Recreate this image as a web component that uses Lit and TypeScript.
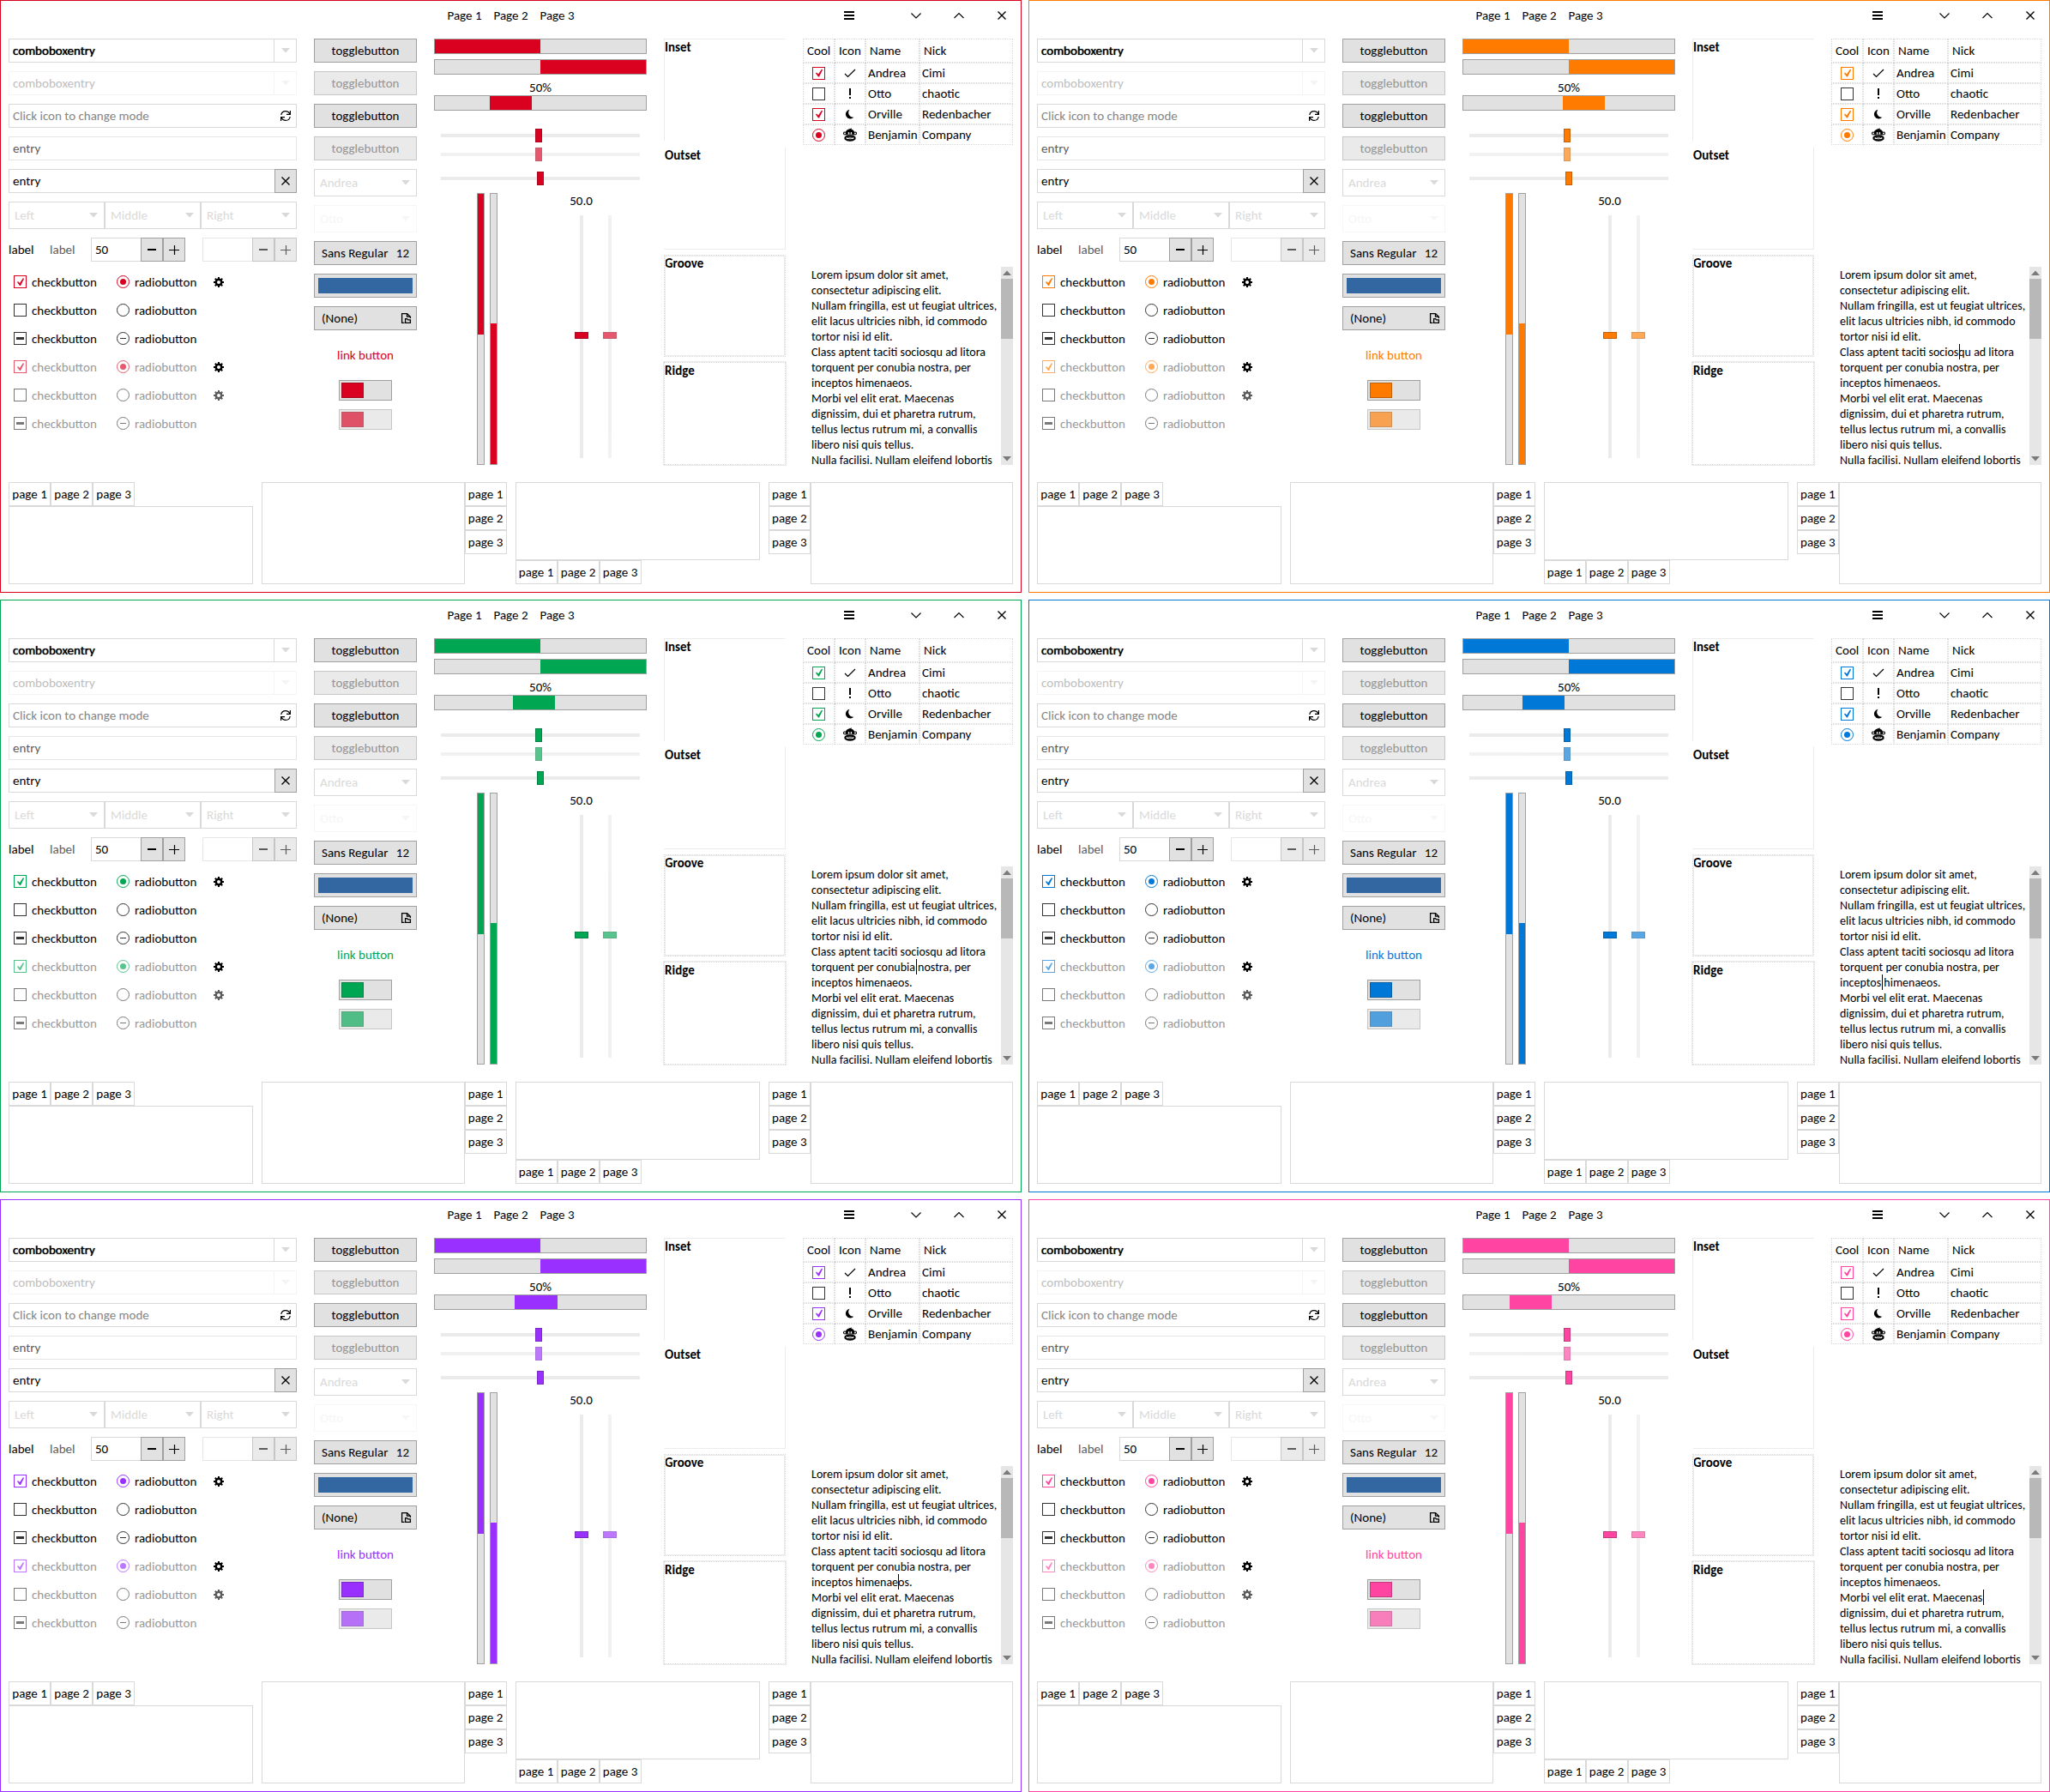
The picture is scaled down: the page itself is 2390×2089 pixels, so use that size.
import { LitElement, html, svg, css, nothing } from "lit";
import { customElement, property } from "lit/decorators.js";

interface Theme {
  accent: string;
  /** Left edge of the pulsing block, in percent of the trough. */
  pulse: number;
  /** Caret place in the text view: pixels from the left, and the line. */
  caret?: { x: number; line: number };
}

const THEMES: Theme[] = [
  { accent: "#d90020", pulse: 26 },
  { accent: "#ff7b00", pulse: 47, caret: { x: 149, line: 5 } },
  { accent: "#00a651", pulse: 37, caret: { x: 132, line: 6 } },
  { accent: "#0078d7", pulse: 28, caret: { x: 59, line: 7 } },
  { accent: "#9a30ff", pulse: 38, caret: { x: 111, line: 7 } },
  { accent: "#ff45a1", pulse: 22, caret: { x: 177, line: 8 } },
];

/** Filled share of the upright level bars. */
const LEVEL = 52;

const LOREM = [
  "Lorem ipsum dolor sit amet,",
  "consectetur adipiscing elit.",
  "Nullam fringilla, est ut feugiat ultrices,",
  "elit lacus ultricies nibh, id commodo",
  "tortor nisi id elit.",
  "Class aptent taciti sociosqu ad litora",
  "torquent per conubia nostra, per",
  "inceptos himenaeos.",
  "Morbi vel elit erat. Maecenas",
  "dignissim, dui et pharetra rutrum,",
  "tellus lectus rutrum mi, a convallis",
  "libero nisi quis tellus.",
  "Nulla facilisi. Nullam eleifend lobortis",
].join("\n");

const icon = (size: number, body: unknown) =>
  html`<svg class="icon" width=${size} height=${size} viewBox="0 0 ${size} ${size}" aria-hidden="true">${body}</svg>`;

const arrow = () =>
  html`<svg class="icon arrow" width="10" height="6" viewBox="0 0 10 6" aria-hidden="true"><path d="M0 0h10L5 5.500z" fill="currentColor" /></svg>`;
const menuIcon = () => icon(16, svg`<path d="M2 3h12v2H2zM2 7h12v2H2zM2 11h12v2H2z" fill="currentColor" />`);
const downIcon = () => icon(16, svg`<path d="M2.500 5.500l5.500 5.500L13.500 5.500" fill="none" stroke="currentColor" stroke-width="1.1" />`);
const upIcon = () => icon(16, svg`<path d="M2.500 11L8 5.500l5.500 5.500" fill="none" stroke="currentColor" stroke-width="1.1" />`);
const closeIcon = () => icon(16, svg`<path d="M3.500 3.500l9 9M12.500 3.500l-9 9" fill="none" stroke="currentColor" stroke-width="1.400" />`);
const minusIcon = () => icon(16, svg`<path d="M3 7h10v2H3z" fill="currentColor" />`);
const plusIcon = () => icon(16, svg`<path d="M2 8.500h12M8.500 3v11" stroke="currentColor" stroke-width="1.200" fill="none" />`);
const refreshIcon = () =>
  icon(16, svg`<g fill="none" stroke="currentColor" stroke-width="1.200">
    <path d="M2.800 7C3.200 4.200 5.500 2.600 8 2.600c2.200 0 4 1.200 5 3.400" /><path d="M13.400 2v4.400H9" />
    <path d="M13.200 9C12.800 11.800 10.500 13.400 8 13.400c-2.200 0-4-1.200-5-3.400" /><path d="M2.600 14V9.600H7" /></g>`);
const fileIcon = () =>
  icon(16, svg`<path d="M6.500 13.400H3.600V2.600h6l3.800 3.600V8M9.500 2.600v3.600h3.600" fill="none" stroke="currentColor" stroke-width="1.300" />
    <path d="M7.600 13.400V8.600h2l1 1.200h2.800v3.600z" fill="none" stroke="currentColor" stroke-width="1.300" />`);
const gearIcon = () =>
  icon(12, svg`<g fill="currentColor"><path fill-rule="evenodd" d="M6 1.500a4.500 4.500 0 1 0 0 9a4.500 4.500 0 1 0 0-9zM6 4a2 2 0 1 1 0 4a2 2 0 1 1 0-4z" />
    ${[0, 45, 90, 135].map((a) => svg`<path transform="rotate(${a} 6 6)" d="M5 0h2v2.600H5zM5 9.400h2V12H5z" />`)}</g>`);
const tickIcon = () => icon(16, svg`<path d="M2 9l3.500 3.500L14 4" fill="none" stroke="currentColor" stroke-width="1.200" />`);
const alertIcon = () => icon(16, svg`<path d="M7 2h2v8H7zM7 12h2v2H7z" fill="currentColor" />`);
const moonIcon = () => icon(16, svg`<path d="M7.500 2.800a5.400 5.400 0 1 0 5 8.800A5.400 5.400 0 0 1 7.500 2.800z" fill="currentColor" />`);
const monkeyIcon = () =>
  icon(16, svg`<path d="M6.500 0.500l1.500 1L9.500 0v2L8 3z" fill="currentColor" />
    <ellipse cx="8" cy="6.200" rx="5.300" ry="4.800" fill="currentColor" />
    <g fill="#fff" stroke="currentColor" stroke-width="1.100"><circle cx="2" cy="6.500" r="1.500" /><circle cx="14" cy="6.500" r="1.500" /></g>
    <path d="M5.800 7.600V5.400a.8.8 0 0 1 1.500 0v2.200M8.700 7.600V5.400a.8.8 0 0 1 1.500 0v2.200" fill="#fff" />
    <ellipse cx="8" cy="12" rx="7" ry="4" fill="currentColor" stroke="#fff" stroke-width=".5" />
    <ellipse cx="8" cy="12" rx="4.600" ry="1.200" fill="#fff" />
    <path d="M4.600 11.200c2.200 1 4.600 1 6.800 0" stroke="currentColor" stroke-width=".8" fill="none" />`);

@customElement("demo-window")
export class DemoWindow extends LitElement {
  @property({ attribute: false }) theme: Theme = THEMES[0];

  static styles = css`
    :host {
      display: block;
      box-sizing: border-box;
      border: 1px solid var(--accent);
      padding: 0 9px 9px;
      background: #fff;
      color: #000;
    }
    *, *::before, *::after { box-sizing: border-box; }
    button, input, select, textarea { font: inherit; color: inherit; margin: 0; border-radius: 0; }
    button { padding: 0; cursor: default; }
    .icon { display: block; flex: none; }

    .header { display: grid; grid-template-columns: 1fr auto 1fr; align-items: center; height: 34px; margin-bottom: 10px; }
    .pages { grid-column: 2; display: flex; gap: 14px; }
    .bare { display: flex; background: none; border: 0; }
    .controls { display: flex; justify-content: flex-end; gap: 34px; padding-right: 5px; }
    .controls .menu { margin-right: 28px; }

    .body { display: grid; grid-template-columns: 336fr 120fr 248fr 142fr 245fr; gap: 20px; }
    .col { display: flex; flex-direction: column; gap: 10px; min-width: 0; }

    .field { display: flex; align-items: center; height: 28px; border: 1px solid #d9d9d9; }
    .field input { flex: 1; min-width: 0; width: 0; height: 100%; border: 0; padding: 0 4px; background: none; outline: 0; -webkit-text-fill-color: currentColor; }
    .field input::placeholder { color: #858585; opacity: 1; -webkit-text-fill-color: #858585; }
    .field.focus input { text-shadow: 0 0 1px #000; }
    .field.off { border-color: #e6e6e6; color: #5c5c5c; }
    .field.faint { border-color: #f4f4f4; color: #bdbdbd; }
    .field.joined { flex: 1; min-width: 0; border-right: 0; }
    .drop { display: grid; place-items: center; width: 26px; height: 26px; border: 0; border-left: 1px solid #d9d9d9; background: none; color: #d9d9d9; }
    .faint .drop { border-color: #f4f4f4; color: #f4f4f4; }
    .field .refresh { width: 25px; justify-content: center; }
    .row { display: flex; }

    .btn { display: flex; align-items: center; justify-content: center; height: 28px; border: 1px solid #a0a0a0; background: #e1e1e1; }
    .btn.square { width: 26px; flex: none; }
    .btn:disabled { background: #eaeaea; border-color: #c6c6c6; color: #949494; }
    .btn.square:disabled { color: #5c5c5c; }
    .btn.spread { justify-content: space-between; padding: 0 8px; }
    .btn.file { padding-right: 4px; }
    .btn.swatch { padding: 4px; }
    .swatch .fill { flex: 1; align-self: stretch; background: #3267a1; }

    .combo { display: grid; flex: 1; min-width: 0; align-items: center; height: 32px; border: 1px solid #d9d9d9; color: #d9d9d9; }
    .col > .combo { flex: none; }
    .combo select { grid-area: 1 / 1; width: 100%; height: 30px; padding: 0 6px; appearance: none; border: 0; background: none; opacity: 1; }
    .combo .arrow { grid-area: 1 / 1; justify-self: end; margin-right: 7px; pointer-events: none; }
    .combo.faint { border-color: #f6f6f6; color: #f6f6f6; }

    .spins { display: flex; align-items: center; gap: 20px; }
    .spins .text { width: 28px; }
    .spins .dim { color: #5c5c5c; }
    .spin { display: flex; flex: 1; min-width: 0; }

    .checks { display: grid; grid-template-columns: 120px 113px 1fr; grid-auto-rows: 27px; row-gap: 6px; align-items: center; padding: 0 0 35px 6px; }
    .check { display: flex; align-items: center; gap: 6px; }
    .check.off, .gear.off { color: #999; }
    .gear { width: 12px; }
    .gear.off { color: #5c5c5c; }
    .mark { flex: none; width: 15px; height: 15px; border: 1px solid #333; background: #fff; appearance: none; display: grid; place-items: center; color: #333; }
    .mark[type="radio"] { border-radius: 50%; }
    .mark:checked { border-color: var(--accent); color: var(--accent); }
    .mark:disabled { opacity: 0.65; }
    .mark[type="checkbox"]:checked::before { content: ""; width: 13px; height: 13px; background: currentColor; clip-path: polygon(3px 7px, 4px 6px, 6px 8px, 10px 2px, 11px 3px, 7px 11px, 6px 11px); }
    .mark[type="radio"]:checked::before { content: ""; width: 7px; height: 7px; border-radius: 50%; background: currentColor; }
    .mark.mixed::before { content: ""; width: 9px; height: 3px; background: currentColor; }
    .mark.mixed[type="radio"]::before { width: 7px; height: 1px; }

    .link { display: grid; place-items: center; height: 38px; color: var(--accent); text-decoration: none; }
    .switch { align-self: center; width: 62px; height: 24px; padding: 2px; border: 1px solid #a0a0a0; background: #e1e1e1; appearance: none; margin: 0; display: block; }
    .switch::before { content: ""; display: block; width: 26px; height: 18px; background: var(--accent); border: 1px solid var(--edge); }
    .switch:disabled { background: #eaeaea; border-color: #c6c6c6; }
    .switch:disabled::before { opacity: 0.65; }

    .meters { gap: 0; }
    .bar { display: flex; height: 18px; border: 1px solid #a0a0a0; background: #e1e1e1; }
    .bar + .bar { margin-top: 6px; }
    .bar.inverted { justify-content: flex-end; }
    .part { background: var(--accent); }
    .percent { margin-top: 6px; line-height: 18px; text-align: center; }
    .sliders { display: flex; flex-direction: column; padding: 21px 8px 9px; gap: 6px; }
    .slider { display: block; width: 100%; height: 16px; background: none; appearance: none; outline: 0; }
    .slider::-webkit-slider-runnable-track { height: 4px; background: #ebebeb; }
    .slider::-webkit-slider-thumb { appearance: none; width: 8px; height: 16px; margin-top: -6px; background: var(--accent); border: 1px solid var(--edge); }
    .slider:disabled { opacity: 0.65; }
    .slider.apart { margin-top: 6px; }
    .uprights { display: flex; flex: 1; padding-left: 50px; }
    .vbar { display: flex; flex-direction: column; width: 9px; margin-right: 6px; border: 1px solid #a0a0a0; background: #e1e1e1; }
    .vbar.inverted { flex-direction: column-reverse; }
    .vscales { display: grid; grid-template: 26px 1fr / 33px 33px; justify-items: center; margin-left: 75px; padding-bottom: 8px; }
    .vscales .value { line-height: 18px; }
    .slider.upright { grid-row: 2; writing-mode: vertical-lr; width: 16px; height: 100%; }
    .slider.upright::-webkit-slider-runnable-track { width: 4px; height: auto; }
    .slider.upright::-webkit-slider-thumb { width: 16px; height: 8px; margin: 0 0 0 -6px; }

    .frames { gap: 6px; }
    .frame { flex: 1; border: 1px solid transparent; font-weight: bold; line-height: 18px; }
    .frame.inset { border-color: #ebebeb transparent transparent #ebebeb; }
    .frame.outset { border-color: transparent #ebebeb #ebebeb transparent; }
    .frame.groove { border: 1px dotted #d9d9d9; outline: 1px solid #ebebeb; outline-offset: -2px; }
    .frame.ridge { border: 1px dotted #d9d9d9; outline: 1px solid #ebebeb; }

    .lists { justify-content: space-between; }
    table { width: 100%; table-layout: fixed; border-collapse: separate; border-spacing: 0; }
    .c-cool { width: 37px; }
    .c-icon { width: 36px; }
    .c-name { width: 63px; }
    th, td { border: 1px dotted #d9d9d9; text-align: left; font-weight: normal; white-space: nowrap; }
    th { height: 28px; padding: 0 4px; }
    td { height: 24px; padding: 0 2px; }
    td .mark, td .icon { margin: 0 auto; }
    .textview { position: relative; display: flex; height: 231px; }
    .textview textarea { flex: 1; min-width: 0; padding: 1px 0 0 10px; border: 0; outline: 0; resize: none; overflow: hidden; white-space: pre; background: none; font-size: 14px; line-height: 18px; }
    .caret { position: absolute; width: 1px; height: 18px; background: #000; }
    .scrollbar { display: flex; flex-direction: column; align-items: center; width: 14px; background: #e6e6e6; color: #7a7a7a; }
    .scrollbar .up { transform: scaleY(-1); }
    .thumb { width: 14px; height: 70px; background: #b8b8b8; margin-bottom: auto; }

    .books { display: grid; grid-template-columns: repeat(4, 1fr); gap: 10px; margin-top: 20px; height: 119px; }
    .book { display: flex; }
    .book.top { flex-direction: column; }
    .book.bottom { flex-direction: column-reverse; }
    .book.right { flex-direction: row-reverse; }
    .tabs { display: flex; }
    .left .tabs, .right .tabs { flex-direction: column; }
    .tab { width: 49px; height: 28px; border: 1px solid #d9d9d9; background: none; white-space: nowrap; }
    .sheet { flex: 1; border: 1px solid #d9d9d9; }
  `;

  private entry(cls: string, label: string, value: string, tail: unknown, placeholder = "") {
    return html`<div class="field ${cls}">
      <input type="text" aria-label=${label} .value=${value} placeholder=${placeholder} ?disabled=${cls === "faint" || cls === "off"} />${tail}
    </div>`;
  }

  private combo(label: string, off = false) {
    return html`<div class="combo ${off ? "faint" : ""}">
      <select aria-label=${label} ?disabled=${off}><option>${label}</option></select>${arrow()}
    </div>`;
  }

  private spin(value: string, off = false) {
    return html`<div class="spin">
      <div class="field joined ${off ? "off" : ""}"><input type="text" aria-label="amount" .value=${value} ?disabled=${off} /></div>
      <button class="btn square" aria-label="decrease" ?disabled=${off}>${minusIcon()}</button>
      <button class="btn square" aria-label="increase" ?disabled=${off}>${plusIcon()}</button>
    </div>`;
  }

  private mark(type: string, state: string, off = false, label?: string) {
    return html`<input class="mark ${state === "mixed" ? "mixed" : ""}" type=${type} aria-label=${label ?? nothing}
      ?checked=${state === "on"} ?disabled=${off} />`;
  }

  private checkRow(state: string, off: boolean) {
    return html`<label class="check ${off ? "off" : ""}">${this.mark("checkbox", state, off)}checkbutton</label>
      <label class="check ${off ? "off" : ""}">${this.mark("radio", state, off)}radiobutton</label>`;
  }

  private gear(off = false) {
    return html`<button class="bare gear ${off ? "off" : ""}" aria-label="settings" ?disabled=${off}>${gearIcon()}</button>`;
  }

  private levelBar(cls = "") {
    return html`<div class="vbar ${cls}">
      <div class="part" style="flex:${LEVEL} 0 0px"></div><div style="flex:${100 - LEVEL} 0 0px"></div>
    </div>`;
  }

  private book(side: string) {
    return html`<div class="book ${side}">
      <div class="tabs">${[1, 2, 3].map((n) => html`<button class="tab">page ${n}</button>`)}</div>
      <div class="sheet"></div>
    </div>`;
  }

  render() {
    const { pulse, caret } = this.theme;
    const blank = html`<span></span>`;
    const people = [
      ["checkbox", "on", tickIcon(), "Andrea", "Cimi"],
      ["checkbox", "off", alertIcon(), "Otto", "chaotic"],
      ["checkbox", "on", moonIcon(), "Orville", "Redenbacher"],
      ["radio", "on", monkeyIcon(), "Benjamin", "Company"],
    ] as const;
    return html`
      <header class="header">
        <nav class="pages">${[1, 2, 3].map((n) => html`<button class="bare">Page ${n}</button>`)}</nav>
        <div class="controls">
          <button class="bare menu" aria-label="menu">${menuIcon()}</button>
          <button class="bare" aria-label="minimize">${downIcon()}</button>
          <button class="bare" aria-label="maximize">${upIcon()}</button>
          <button class="bare" aria-label="close">${closeIcon()}</button>
        </div>
      </header>
      <div class="body">
        <section class="col">
          ${this.entry("focus", "combo entry", "comboboxentry", html`<button class="drop" aria-label="open">${arrow()}</button>`)}
          ${this.entry("faint", "combo entry", "comboboxentry", html`<button class="drop" aria-label="open" disabled>${arrow()}</button>`)}
          ${this.entry("", "mode", "", html`<button class="bare refresh" aria-label="change mode">${refreshIcon()}</button>`, "Click icon to change mode")}
          ${this.entry("off", "entry", "entry", nothing)}
          <div class="row">
            ${this.entry("joined", "entry", "entry", nothing)}
            <button class="btn square" aria-label="clear">${closeIcon()}</button>
          </div>
          <div class="row">${["Left", "Middle", "Right"].map((t) => this.combo(t))}</div>
          <div class="spins">
            <span class="text">label</span><span class="text dim">label</span>
            ${this.spin("50")}${this.spin("", true)}
          </div>
          <div class="checks">
            ${this.checkRow("on", false)}${this.gear()}
            ${this.checkRow("off", false)}${blank}
            ${this.checkRow("mixed", false)}${blank}
            ${this.checkRow("on", true)}${this.gear()}
            ${this.checkRow("off", true)}${this.gear(true)}
            ${this.checkRow("mixed", true)}${blank}
          </div>
        </section>

        <section class="col">
          ${[false, true, false, true].map((off) => html`<button class="btn" ?disabled=${off}>togglebutton</button>`)}
          ${this.combo("Andrea")}${this.combo("Otto", true)}
          <button class="btn spread"><span>Sans Regular</span><span>12</span></button>
          <button class="btn swatch" aria-label="colour"><span class="fill"></span></button>
          <button class="btn spread file"><span>(None)</span>${fileIcon()}</button>
          <a class="link" href="#">link button</a>
          <input class="switch" type="checkbox" role="switch" aria-label="switch" />
          <input class="switch" type="checkbox" role="switch" aria-label="switch" disabled />
        </section>

        <section class="col meters">
          <div class="bar"><div class="part" style="width:50%"></div></div>
          <div class="bar inverted"><div class="part" style="width:50%"></div></div>
          <div class="percent">50%</div>
          <div class="bar"><div class="part" style="width:20%;margin-left:${pulse}%"></div></div>
          <div class="sliders">
            <input class="slider" type="range" aria-label="scale" step="any" value="49" />
            <input class="slider" type="range" aria-label="scale" step="any" value="49" disabled />
            <input class="slider apart" type="range" aria-label="scale" value="50" />
          </div>
          <div class="uprights">
            ${this.levelBar()}${this.levelBar("inverted")}
            <div class="vscales">
              <span class="value">50.0</span>
              <input class="slider upright" type="range" aria-label="scale" step="any" value="49.5" />
              <input class="slider upright" type="range" aria-label="scale" step="any" value="49.5" disabled />
            </div>
          </div>
        </section>

        <section class="col frames">
          ${["Inset", "Outset", "Groove", "Ridge"].map((t) => html`<div class="frame ${t.toLowerCase()}">${t}</div>`)}
        </section>

        <section class="col lists">
          <table>
            <thead><tr><th class="c-cool">Cool</th><th class="c-icon">Icon</th><th class="c-name">Name</th><th>Nick</th></tr></thead>
            <tbody>
              ${people.map(([type, state, glyph, name, nick]) => html`<tr>
                <td>${this.mark(type, state, false, name)}</td><td>${glyph}</td><td>${name}</td><td>${nick}</td>
              </tr>`)}
            </tbody>
          </table>
          <div class="textview">
            <textarea aria-label="text" .value=${LOREM}></textarea>
            ${caret ? html`<span class="caret" style="left:${caret.x}px;top:${caret.line * 18}px"></span>` : nothing}
            <div class="scrollbar">
              <svg class="icon up" width="10" height="14" viewBox="0 0 10 6"><path d="M0 0h10L5 5.500z" fill="currentColor" /></svg>
              <div class="thumb"></div>
              <svg class="icon" width="10" height="14" viewBox="0 0 10 6"><path d="M0 0h10L5 5.500z" fill="currentColor" /></svg>
            </div>
          </div>
        </section>
      </div>
      <div class="books">${["top", "right", "bottom", "left"].map((s) => this.book(s))}</div>
    `;
  }
}

@customElement("app-root")
export class AppRoot extends LitElement {
  static styles = css`
    :host {
      display: grid;
      grid-template-columns: 1fr 1fr;
      gap: 8px;
      background: #fff;
      font: 15px/18px Carlito, Lato, "Liberation Sans", sans-serif;
    }
    .window { min-width: 0; --edge: color-mix(in srgb, var(--accent) 72%, #222); }
  `;

  render() {
    return THEMES.map((t) => html`<demo-window class="window" style="--accent:${t.accent}" .theme=${t}></demo-window>`);
  }
}
